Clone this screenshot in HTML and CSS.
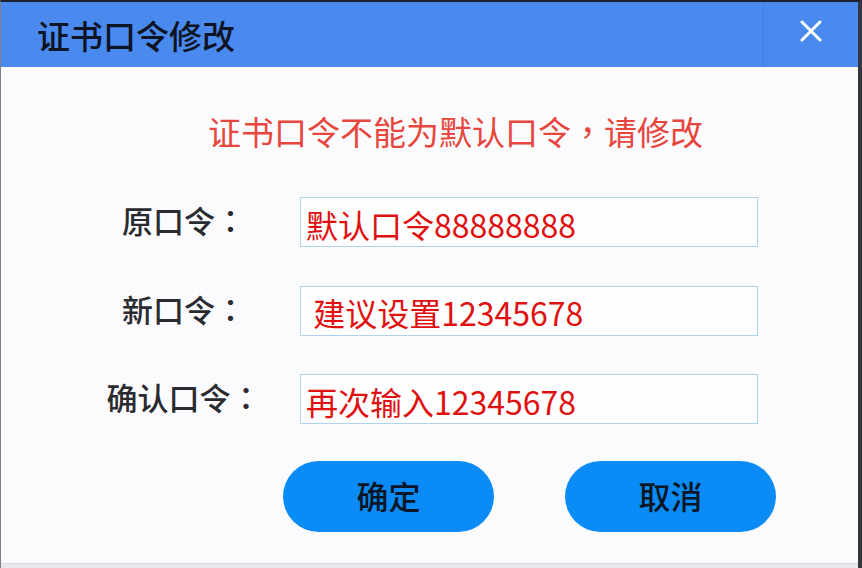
FILE: index.html
```html
<!DOCTYPE html>
<html lang="zh-CN">
<head>
<meta charset="utf-8">
<title>证书口令修改</title>
<link rel="stylesheet" href="styles.css">
</head>
<body>
<div class="frame">
  <div class="window">
    <div class="titlebar">
      <div class="title">证书口令修改</div>
      <div class="close">
        <svg width="22" height="22" viewBox="0 0 22 22"><path d="M2 2 L20 20 M20 2 L2 20" stroke="#fff" stroke-width="3" stroke-linecap="round"/></svg>
      </div>
    </div>
    <div class="content">
      <div class="message">证书口令不能为默认口令<span class="punct" lang="zh-TW">，</span>请修改</div>
      <div class="form">
        <div class="label">原口令<span class="punct" lang="zh-TW">：</span></div>
        <input class="field" type="text" value="默认口令88888888" readonly>
        <div class="label">新口令<span class="punct" lang="zh-TW">：</span></div>
        <input class="field" type="text" value=" 建议设置12345678" readonly>
        <div class="label">确认口令<span class="punct" lang="zh-TW">：</span></div>
        <input class="field" type="text" value="再次输入12345678" readonly>
      </div>
      <div class="buttons">
        <button class="btn">确定</button>
        <button class="btn">取消</button>
      </div>
    </div>
  </div>
  <div class="bottom"></div>
</div>
</body>
</html>
```

FILE: styles.css
```css
html, body {
  margin: 0;
  padding: 0;
}
body {
  width: 862px;
  height: 568px;
  overflow: hidden;
  background: #2e323a;
  font-family: "Noto Sans CJK SC", "Noto Sans", sans-serif;
}
.frame {
  box-sizing: border-box;
  width: 862px;
  height: 568px;
  border-top: 2px solid #1c2233;
  border-left: 1px solid #7a7e86;
  border-right: 4px solid #34373e;
  display: flex;
  flex-direction: column;
}
.window {
  height: 561px;
  display: flex;
  flex-direction: column;
  background: #fbfbfd;
}
.titlebar {
  height: 65px;
  background: #4a89ee;
  display: flex;
  align-items: stretch;
}
.title {
  flex: 1;
  padding-left: 36px;
  font-size: 33px;
  line-height: 66px;
  color: #0e1424;
  font-weight: 500;
}
.close {
  width: 95px;
  border-left: 1px solid #3f7edf;
  display: flex;
  align-items: center;
  justify-content: center;
  padding-bottom: 7px;
  box-sizing: border-box;
}
.content {
  flex: 1;
  display: flex;
  flex-direction: column;
}
.punct {
  font-family: "Noto Sans CJK TC", "Noto Sans CJK JP", "Noto Sans CJK SC", sans-serif;
}
.message {
  margin-top: 44px;
  padding-left: 207px;
  font-size: 33px;
  line-height: 40px;
  color: #e8453c;
}
.form {
  margin-top: 46px;
  display: grid;
  grid-template-columns: 232px 458px;
  grid-auto-rows: 50px;
  row-gap: 38.5px;
  padding-left: 67px;
  align-items: center;
}
.label {
  text-align: center;
  font-size: 31px;
  line-height: 40px;
  color: #2a2b30;
  font-weight: 500;
  padding-bottom: 4px;
}
.field {
  box-sizing: border-box;
  width: 458px;
  height: 50px;
  margin: 0;
  border: 1px solid #aed3ea;
  background: #fefefe;
  padding: 3px 0 0 5px;
  font-family: "Noto Sans CJK SC", "Noto Sans", sans-serif;
  font-size: 32px;
  color: #e01010;
  outline: none;
  white-space: pre;
}
.buttons {
  margin-top: 37px;
  padding-left: 282px;
  display: flex;
  gap: 71px;
}
.btn {
  width: 211px;
  height: 71px;
  border: none;
  border-radius: 36px;
  background: #0b8bf6;
  color: #0b1626;
  font-family: "Noto Sans CJK SC", "Noto Sans", sans-serif;
  font-size: 32px;
  font-weight: 500;
  padding: 0 0 4px 0;
  cursor: pointer;
}
.bottom {
  flex: 1;
  background: #e8e8ec;
  border-top: 1px solid #d9d9de;
}
```
